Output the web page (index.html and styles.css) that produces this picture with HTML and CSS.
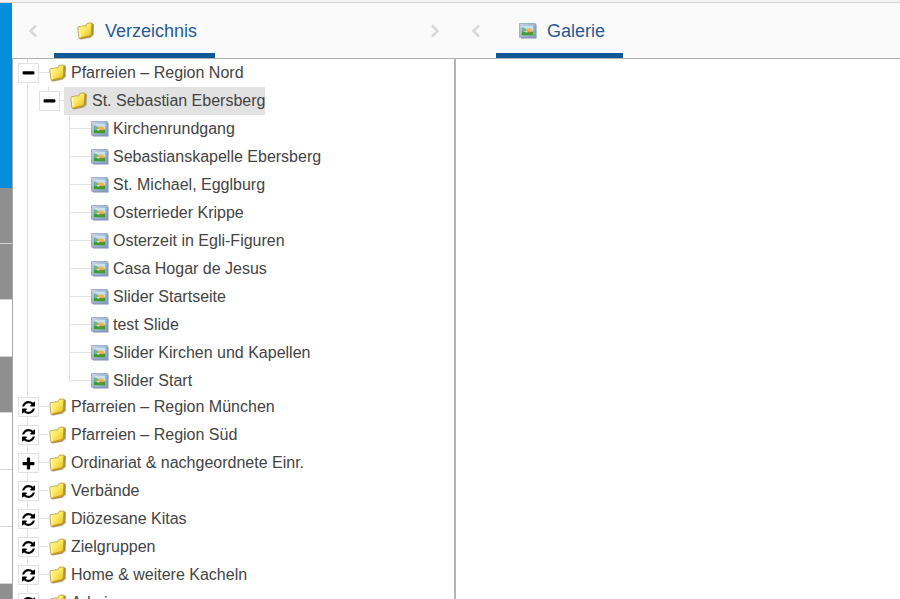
FILE: index.html
```
<!DOCTYPE html>
<html lang="de">
<head>
    <meta charset="UTF-8">
    <meta name="viewport" content="width=device-width, initial-scale=1.0">
    <title>Galerie</title>
    <link rel="stylesheet" href="styles.css">
</head>
<body>

    <!-- Icon definitions -->
    <svg class="icon-defs" aria-hidden="true">
        <defs>
            <linearGradient id="gold" x1="0" y1="0" x2="1" y2="1">
                <stop offset="0" stop-color="#fffbb8"/>
                <stop offset="0.5" stop-color="#fbe75a"/>
                <stop offset="1" stop-color="#e2b91c"/>
            </linearGradient>
            <linearGradient id="frame" x1="0" y1="0" x2="1" y2="1">
                <stop offset="0" stop-color="#c3d6ea"/>
                <stop offset="1" stop-color="#8196b6"/>
            </linearGradient>
        </defs>
        <symbol id="folder" viewBox="0 0 18 18">
            <path d="M2 16.5 4 17.800 13.800 16 17 13V3L15 2z" fill="#cfcbbd"/>
            <path d="M13.500 1.300 15.800 1.400 16.800 2.600 16.200 12.300 13.300 15.300 4 17.200 2 16.500z" fill="#a8904a"/>
            <path d="M.800 5.900Q.800 5 1.800 4.700L7.500 3.700 8.600 4.300 9.500 2.200Q9.800 1.400 10.700 1.300L13.900.900Q14.900.900 14.900 1.900L14.200 12.800Q14 14 12.900 14.300L3.200 16.500Q2.100 16.600 1.900 15.600z" fill="url(#gold)" stroke="#b8953a" stroke-width="0.800"/>
            <path d="M2.300 6.300 3.300 15.300" stroke="#fffde0" stroke-width="1" fill="none"/>
            <path d="M3.300 15.700 12.800 13.600 13.700 12.300" stroke="#c59a10" stroke-width="0.900" fill="none"/>
        </symbol>
        <symbol id="picture" viewBox="0 0 18 16">
            <path d="M2 1.500H17.500V15.500H2z" fill="#7d8ba6"/>
            <path d="M.500.500H16.300V14.300H.500z" fill="url(#frame)" stroke="#8fa5c2" stroke-width="0.800"/>
            <path d="M2.800 2.800H14.200V12.200H2.800z" fill="#c3e2ee"/>
            <path d="M2.800 4.800C5 3.600 6.500 6 8.500 6.800L6 8.500 2.800 8z" fill="#74b096"/>
            <path d="M2.800 8.200C5.500 8 6.500 10 9 9.500S12.500 8.300 14.200 8.600V12.200H2.800z" fill="#3f9c31"/>
            <path d="M6.800 7.600C8 4.600 12 4.600 13.500 7.600L10.500 9.800z" fill="#f0b548"/>
            <path d="M8.300 8.700H11V10H8.300z" fill="#d9682c"/>
        </symbol>
        <symbol id="refresh" viewBox="0 128 1536 1536">
            <path d="M1511 1056q0 5-1 7-64 268-268 434.500t-478 166.500q-146 0-282.500-55t-243.500-157l-129 129q-19 19-45 19t-45-19-19-45v-448q0-26 19-45t45-19h448q26 0 45 19t19 45-19 45l-137 137q71 66 161 102t187 36q134 0 250-65t186-179q11-17 53-117 8-23 30-23h192q13 0 22.500 9.500t9.500 22.500zm25-800v448q0 26-19 45t-45 19h-448q-26 0-45-19t-19-45 19-45l138-138q-148-137-349-137-134 0-250 65t-186 179q-11 17-53 117-8 23-30 23h-199q-13 0-22.500-9.500t-9.500-22.500v-7q65-268 270-434.500t480-166.500q146 0 284 55.500t245 156.500l130-129q19-19 45-19t45 19 19 45z"/>
        </symbol>
        <symbol id="minus" viewBox="0 0 12 12">
            <rect x="0.500" y="4" width="11" height="3" rx="1"/>
        </symbol>
        <symbol id="plus" viewBox="0 0 12 12">
            <path d="M5.300.500h1.400q.8 0 .8.800v3.200h3.200q.8 0 .8.800v1.400q0 .8-.8.800H7.500v3.200q0 .8-.8.800H5.300q-.8 0-.8-.8V7.500H1.300q-.8 0-.8-.8V5.300q0-.8.8-.8h3.200V1.300q0-.8.8-.8z"/>
        </symbol>
        <symbol id="prev" viewBox="0 0 10 14">
            <path d="M8 1.500 2.500 7 8 12.500" fill="none" stroke="#d8d8d8" stroke-width="2.500"/>
        </symbol>
        <symbol id="next" viewBox="0 0 10 14">
            <path d="M2 1.500 7.500 7 2 12.500" fill="none" stroke="#d8d8d8" stroke-width="2.500"/>
        </symbol>
    </svg>

    <div class="topbar"></div>

    <div class="workspace">
        <div class="rail">
            <div class="rail-main"></div>
            <div class="rail-item dark"></div>
            <div class="rail-item dark"></div>
            <div class="rail-item"></div>
            <div class="rail-item dark"></div>
            <div class="rail-item"></div>
            <div class="rail-item"></div>
            <div class="rail-item"></div>
            <div class="rail-item dark"></div>
        </div>

        <section class="panel">
            <div class="tabs">
                <button class="scroll" aria-label="Zurück"><svg><use href="#prev"/></svg></button>
                <button class="tab"><svg class="icon"><use href="#folder"/></svg>Verzeichnis</button>
                <button class="scroll last" aria-label="Weiter"><svg><use href="#next"/></svg></button>
            </div>
            <div class="content split">
                <ul class="tree">
                    <li>
                        <div class="row">
                            <button class="toggle" aria-label="Zuklappen"><svg><use href="#minus"/></svg></button>
                            <a class="label" href="#"><svg class="icon"><use href="#folder"/></svg>Pfarreien – Region Nord</a>
                        </div>
                        <ul>
                            <li>
                                <div class="row">
                                    <button class="toggle" aria-label="Zuklappen"><svg><use href="#minus"/></svg></button>
                                    <a class="label selected" href="#"><svg class="icon"><use href="#folder"/></svg>St. Sebastian Ebersberg</a>
                                </div>
                                <ul>
                                    <li><div class="row leaf"><a class="label" href="#"><svg class="icon"><use href="#picture"/></svg>Kirchenrundgang</a></div></li>
                                    <li><div class="row leaf"><a class="label" href="#"><svg class="icon"><use href="#picture"/></svg>Sebastianskapelle Ebersberg</a></div></li>
                                    <li><div class="row leaf"><a class="label" href="#"><svg class="icon"><use href="#picture"/></svg>St. Michael, Egglburg</a></div></li>
                                    <li><div class="row leaf"><a class="label" href="#"><svg class="icon"><use href="#picture"/></svg>Osterrieder Krippe</a></div></li>
                                    <li><div class="row leaf"><a class="label" href="#"><svg class="icon"><use href="#picture"/></svg>Osterzeit in Egli-Figuren</a></div></li>
                                    <li><div class="row leaf"><a class="label" href="#"><svg class="icon"><use href="#picture"/></svg>Casa Hogar de Jesus</a></div></li>
                                    <li><div class="row leaf"><a class="label" href="#"><svg class="icon"><use href="#picture"/></svg>Slider Startseite</a></div></li>
                                    <li><div class="row leaf"><a class="label" href="#"><svg class="icon"><use href="#picture"/></svg>test Slide</a></div></li>
                                    <li><div class="row leaf"><a class="label" href="#"><svg class="icon"><use href="#picture"/></svg>Slider Kirchen und Kapellen</a></div></li>
                                    <li><div class="row leaf"><a class="label" href="#"><svg class="icon"><use href="#picture"/></svg>Slider Start</a></div></li>
                                </ul>
                            </li>
                        </ul>
                    </li>
                    <li>
                        <div class="row">
                            <button class="toggle" aria-label="Laden"><svg><use href="#refresh"/></svg></button>
                            <a class="label" href="#"><svg class="icon"><use href="#folder"/></svg>Pfarreien – Region München</a>
                        </div>
                    </li>
                    <li>
                        <div class="row">
                            <button class="toggle" aria-label="Laden"><svg><use href="#refresh"/></svg></button>
                            <a class="label" href="#"><svg class="icon"><use href="#folder"/></svg>Pfarreien – Region Süd</a>
                        </div>
                    </li>
                    <li>
                        <div class="row">
                            <button class="toggle" aria-label="Aufklappen"><svg><use href="#plus"/></svg></button>
                            <a class="label" href="#"><svg class="icon"><use href="#folder"/></svg>Ordinariat &amp; nachgeordnete Einr.</a>
                        </div>
                    </li>
                    <li>
                        <div class="row">
                            <button class="toggle" aria-label="Laden"><svg><use href="#refresh"/></svg></button>
                            <a class="label" href="#"><svg class="icon"><use href="#folder"/></svg>Verbände</a>
                        </div>
                    </li>
                    <li>
                        <div class="row">
                            <button class="toggle" aria-label="Laden"><svg><use href="#refresh"/></svg></button>
                            <a class="label" href="#"><svg class="icon"><use href="#folder"/></svg>Diözesane Kitas</a>
                        </div>
                    </li>
                    <li>
                        <div class="row">
                            <button class="toggle" aria-label="Laden"><svg><use href="#refresh"/></svg></button>
                            <a class="label" href="#"><svg class="icon"><use href="#folder"/></svg>Zielgruppen</a>
                        </div>
                    </li>
                    <li>
                        <div class="row">
                            <button class="toggle" aria-label="Laden"><svg><use href="#refresh"/></svg></button>
                            <a class="label" href="#"><svg class="icon"><use href="#folder"/></svg>Home &amp; weitere Kacheln</a>
                        </div>
                    </li>
                    <li>
                        <div class="row">
                            <button class="toggle" aria-label="Laden"><svg><use href="#refresh"/></svg></button>
                            <a class="label" href="#"><svg class="icon"><use href="#folder"/></svg>Admin</a>
                        </div>
                    </li>
                </ul>
            </div>
        </section>

        <section class="panel">
            <div class="tabs">
                <button class="scroll" aria-label="Zurück"><svg><use href="#prev"/></svg></button>
                <button class="tab"><svg class="icon"><use href="#picture"/></svg>Galerie</button>
            </div>
            <div class="content"></div>
        </section>
    </div>

</body>
</html>
```

FILE: styles.css
```
* {
    box-sizing: border-box;
}

body {
    margin: 0;
    height: 100vh;
    display: flex;
    flex-direction: column;
    overflow: hidden;
    background-color: #fff;
    color: #444;
    font-family: "Liberation Sans", Arial, sans-serif;
    font-size: 16px;
}

button {
    padding: 0;
    border: 0;
    background: none;
    font-family: inherit;
    cursor: pointer;
}

.icon-defs {
    position: absolute;
    width: 0;
    height: 0;
}

.topbar {
    flex: none;
    height: 3px;
    background-color: #f3f3f3;
    border-bottom: 1px solid #d2d2d2;
}

.workspace {
    flex: 1;
    min-height: 0;
    display: flex;
}

/* Left edge */
.rail {
    flex: none;
    width: 12px;
    overflow: hidden;
}

.rail-main {
    height: 185px;
    background-color: #058fdb;
}

.rail-item {
    height: 57px;
    border-bottom: 1px solid #d5d5d5;
}

.dark {
    height: 56px;
    background-color: #8f8f8f;
}

/* Panels */
.panel {
    flex: 1 1 0;
    min-width: 0;
    display: flex;
    flex-direction: column;
}

.tabs {
    flex: none;
    height: 56px;
    display: flex;
    background-color: #fafafa;
    border-bottom: 1px solid #b0b0b0;
}

.scroll {
    width: 42px;
    display: flex;
    align-items: center;
    justify-content: center;
}

.panel + .panel .scroll {
    width: 40px;
}

.scroll svg {
    width: 10px;
    height: 14px;
}

.last {
    margin-left: auto;
}

.tab {
    display: flex;
    align-items: center;
    gap: 10px;
    padding: 6px 18px 0 23px;
    border-bottom: 5px solid #0f5796;
    color: #285a94;
    font-size: 18px;
}

.icon {
    flex: none;
    width: 18px;
    height: 18px;
}

.content {
    flex: 1;
    min-height: 0;
    overflow: hidden;
}

.split {
    border-left: 1px solid #a8a8a8;
    border-right: 2px solid #b4b4b4;
}

/* Tree */
.tree,
.tree ul {
    margin: 0;
    padding: 0;
    list-style: none;
}

.tree {
    padding-left: 5px;
}

.tree ul {
    margin-bottom: -1px;
    padding-left: 21px;
}

.tree ul ul {
    margin-bottom: -2px;
}

.tree li {
    background: linear-gradient(#e2e2e2, #e2e2e2) 9px 0 / 1px 100% no-repeat;
}

.tree ul > li:last-child {
    background-size: 1px 14px;
}

.row {
    display: flex;
    align-items: center;
    height: 28px;
    background: linear-gradient(#e2e2e2, #e2e2e2) 9px 13px / 22px 1px no-repeat;
}

.leaf {
    padding-left: 21px;
}

.toggle {
    width: 21px;
    height: 20px;
    display: flex;
    align-items: center;
    justify-content: center;
    border: 1px solid #e2e2e2;
    background-color: #fff;
}

.toggle svg {
    width: 13px;
    height: 13px;
    fill: #000;
}

.label {
    display: flex;
    align-items: center;
    gap: 4px;
    height: 28px;
    margin-left: 4px;
    padding-left: 6px;
    color: #444;
    text-decoration: none;
    white-space: nowrap;
}

.selected {
    background-color: #e2e2e2;
}
```
